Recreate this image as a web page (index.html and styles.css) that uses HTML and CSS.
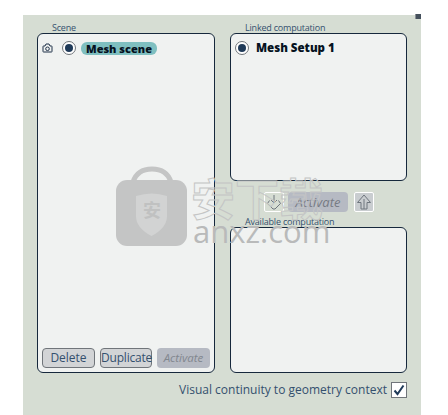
FILE: index.html
```html
<!DOCTYPE html>
<html lang="en">
<head>
<meta charset="utf-8">
<title>Scene</title>
<link rel="stylesheet" href="styles.css">
</head>
<body>
<div class="app">
  <div class="corner"></div>
  <div class="columns">
    <section class="col">
      <div class="label label-scene">Scene</div>
      <div class="panel panel-scene">
        <div class="scene-row">
          <svg class="cam" viewBox="0 0 11 10" width="11" height="10"><path d="M1.500 3h1.500l1-2h3l1 2h1.500q.5 0 .5.5v5q0 .5-.5.5h-8q-.5 0-.5-.5v-5q0-.5.5-.5z" fill="none" stroke="#1f3148" stroke-width="1"/><circle cx="5.500" cy="5.800" r="1.800" fill="none" stroke="#1f3148" stroke-width="1"/></svg>
          <span class="radio"><span class="dot"></span></span>
          <span class="pill">Mesh scene</span>
        </div>
        <div class="actions">
          <button class="btn btn-delete">Delete</button>
          <button class="btn btn-dup">Duplicate</button>
          <button class="btn btn-off btn-act">Activate</button>
        </div>
      </div>
    </section>
    <section class="col">
      <div class="label label-linked">Linked computation</div>
      <div class="panel panel-linked">
        <div class="setup-row">
          <span class="radio"><span class="dot"></span></span>
          <span class="setup">Mesh Setup 1</span>
        </div>
      </div>
      <div class="mid">
        <span class="sq"><svg viewBox="0 0 16 16" width="16" height="16"><path d="M8 1v8M5 6l3 3 3-3M3.500 6.500L1.500 9.500 7 15h2l5.500-5.500-2-3" fill="none" stroke="#6f767e" stroke-width="1"/></svg></span>
        <button class="btn btn-off btn-mid">Activate</button>
        <span class="sq sq-up"><svg viewBox="0 0 16 16" width="16" height="16"><path d="M8 1L1.500 8.500H5V15h6V8.500h3.500zM8 5v10" fill="none" stroke="#6f767e" stroke-width="1"/></svg></span>
      </div>
      <div class="label label-avail">Available computation</div>
      <div class="panel panel-avail"></div>
    </section>
  </div>
  <div class="footer">
    <span class="footer-text">Visual continuity to geometry context</span>
    <span class="check"><svg viewBox="0 0 14 14" width="14" height="14"><path d="M2.500 7.500L5.500 11 11.500 2.500" fill="none" stroke="#1f3a58" stroke-width="2"/></svg></span>
  </div>
  <div class="wm">
    <div class="wm-bag">
      <svg viewBox="0 0 72 80" width="72" height="80">
        <path d="M17 16C20 7 27 3 36 3s16 4 19 13" fill="none" stroke="#c4c5c5" stroke-width="5"/>
        <rect x="0" y="14" width="71" height="66" rx="11" fill="#c4c5c5"/>
        <path d="M20 30q16-5 31 0v20q0 12-15.500 20Q20 62 20 50z" fill="#d2d3d3"/>
      </svg>
      <span class="wm-glyph">安</span>
    </div>
    <div class="wm-text">
      <div class="wm-cn">安下载</div>
      <div class="wm-en">anxz.com</div>
    </div>
  </div>
</div>
</body>
</html>
```

FILE: styles.css
```css
* { box-sizing: border-box; }
html, body { margin: 0; padding: 0; background: #fff; }
body { width: 448px; height: 415px; overflow: hidden; font-family: "Open Sans", "Noto Sans", sans-serif; }
.app { position: relative; margin: 15px 0 0 23px; width: 398px; height: 400px; background: #d6ddd3; padding: 0 14px; color: #34506e; }
.corner { position: absolute; right: 0; top: -1px; width: 6px; height: 5px; background: #45505c; border-left: 1px solid #8a8f95; }
.columns { display: flex; gap: 15px; }
.col { display: flex; flex-direction: column; }
.col:first-child { width: 178px; }
.col:last-child { width: 178px; }
.label { font-size: 9px; line-height: 12px; height: 18px; padding-top: 7px; white-space: nowrap; letter-spacing: -0.2px; }
.label-scene { padding-left: 15px; }
.label-linked { padding-left: 15px; }
.label-avail { height: 12px; padding: 1px 0 0 15px; }
.panel { background: #f0f2f1; border: 1px solid #16283c; border-radius: 6px; }
.panel-scene { height: 340px; display: flex; flex-direction: column; justify-content: space-between; padding: 7px 4px 4px 4px; }
.panel-linked { height: 148px; padding: 7px 4px; }
.panel-avail { height: 146px; }
.scene-row { display: flex; align-items: center; }
.cam { margin-right: 9px; }
.radio { width: 14px; height: 14px; border: 1px solid #70757a; border-radius: 50%; background: #fff; display: flex; align-items: center; justify-content: center; }
.dot { width: 8px; height: 8px; border-radius: 50%; background: #1f3a58; }
.pill { margin-left: 5px; background: #7fbfc0; border-radius: 6px; padding: 0 5px; font: 800 11px/13px "Open Sans", sans-serif; color: #06121f; white-space: nowrap; }
.setup-row { display: flex; align-items: center; gap: 7px; }
.setup { font: 800 11.500px/14px "Open Sans", sans-serif; color: #06121f; white-space: nowrap; }
.actions { display: flex; gap: 5px; }
.btn { height: 20px; padding: 0; border: 1px solid #70757a; border-radius: 4px; background: #d2d4d6; color: #34506e; font: 12px/18px "Open Sans", sans-serif; white-space: nowrap; }
.btn-delete { width: 53px; }
.btn-dup { width: 52px; letter-spacing: -0.2px; }
.btn-off { border: 0; background: #b6bac3; color: #82878f; font-style: italic; }
.btn-act { width: 53px; font-size: 11.500px; }
.mid { height: 34px; display: flex; align-items: flex-start; gap: 4px; padding: 11px 0 0 34px; }
.sq { width: 20px; height: 20px; border: 1px solid #fff; border-radius: 2px; display: flex; align-items: center; justify-content: center; background: #d6ddd3; }
.sq-up { margin-left: 2px; background: #c9cdd0; }
.btn-mid { width: 60px; font-size: 13px; color: #767b83; }
.footer { display: flex; justify-content: flex-end; align-items: center; gap: 4px; padding: 6px 0 0 0; height: 27px; }
.footer-text { font-size: 12px; line-height: 16px; white-space: nowrap; }
.check { width: 16px; height: 16px; border: 1px solid #70757a; background: #fff; display: flex; align-items: center; justify-content: center; }
.wm { position: absolute; left: 93px; top: 151px; display: flex; pointer-events: none; }
.wm-bag { position: relative; width: 72px; height: 80px; }
.wm-glyph { position: absolute; left: 27px; top: 33px; font: 700 18px/20px "Noto Sans CJK SC", sans-serif; color: #c0c1c1; }
.wm-text { margin-left: 3px; margin-top: 9px; }
.wm-cn { font: 700 44px/44px "Noto Sans CJK SC", sans-serif; color: transparent; -webkit-text-stroke: 1px #c4c5c5; white-space: nowrap; }
.wm-en { margin: -4px 0 0 2px; font: 31px/32px "Open Sans", sans-serif; color: #b9baba; white-space: nowrap; }
```
